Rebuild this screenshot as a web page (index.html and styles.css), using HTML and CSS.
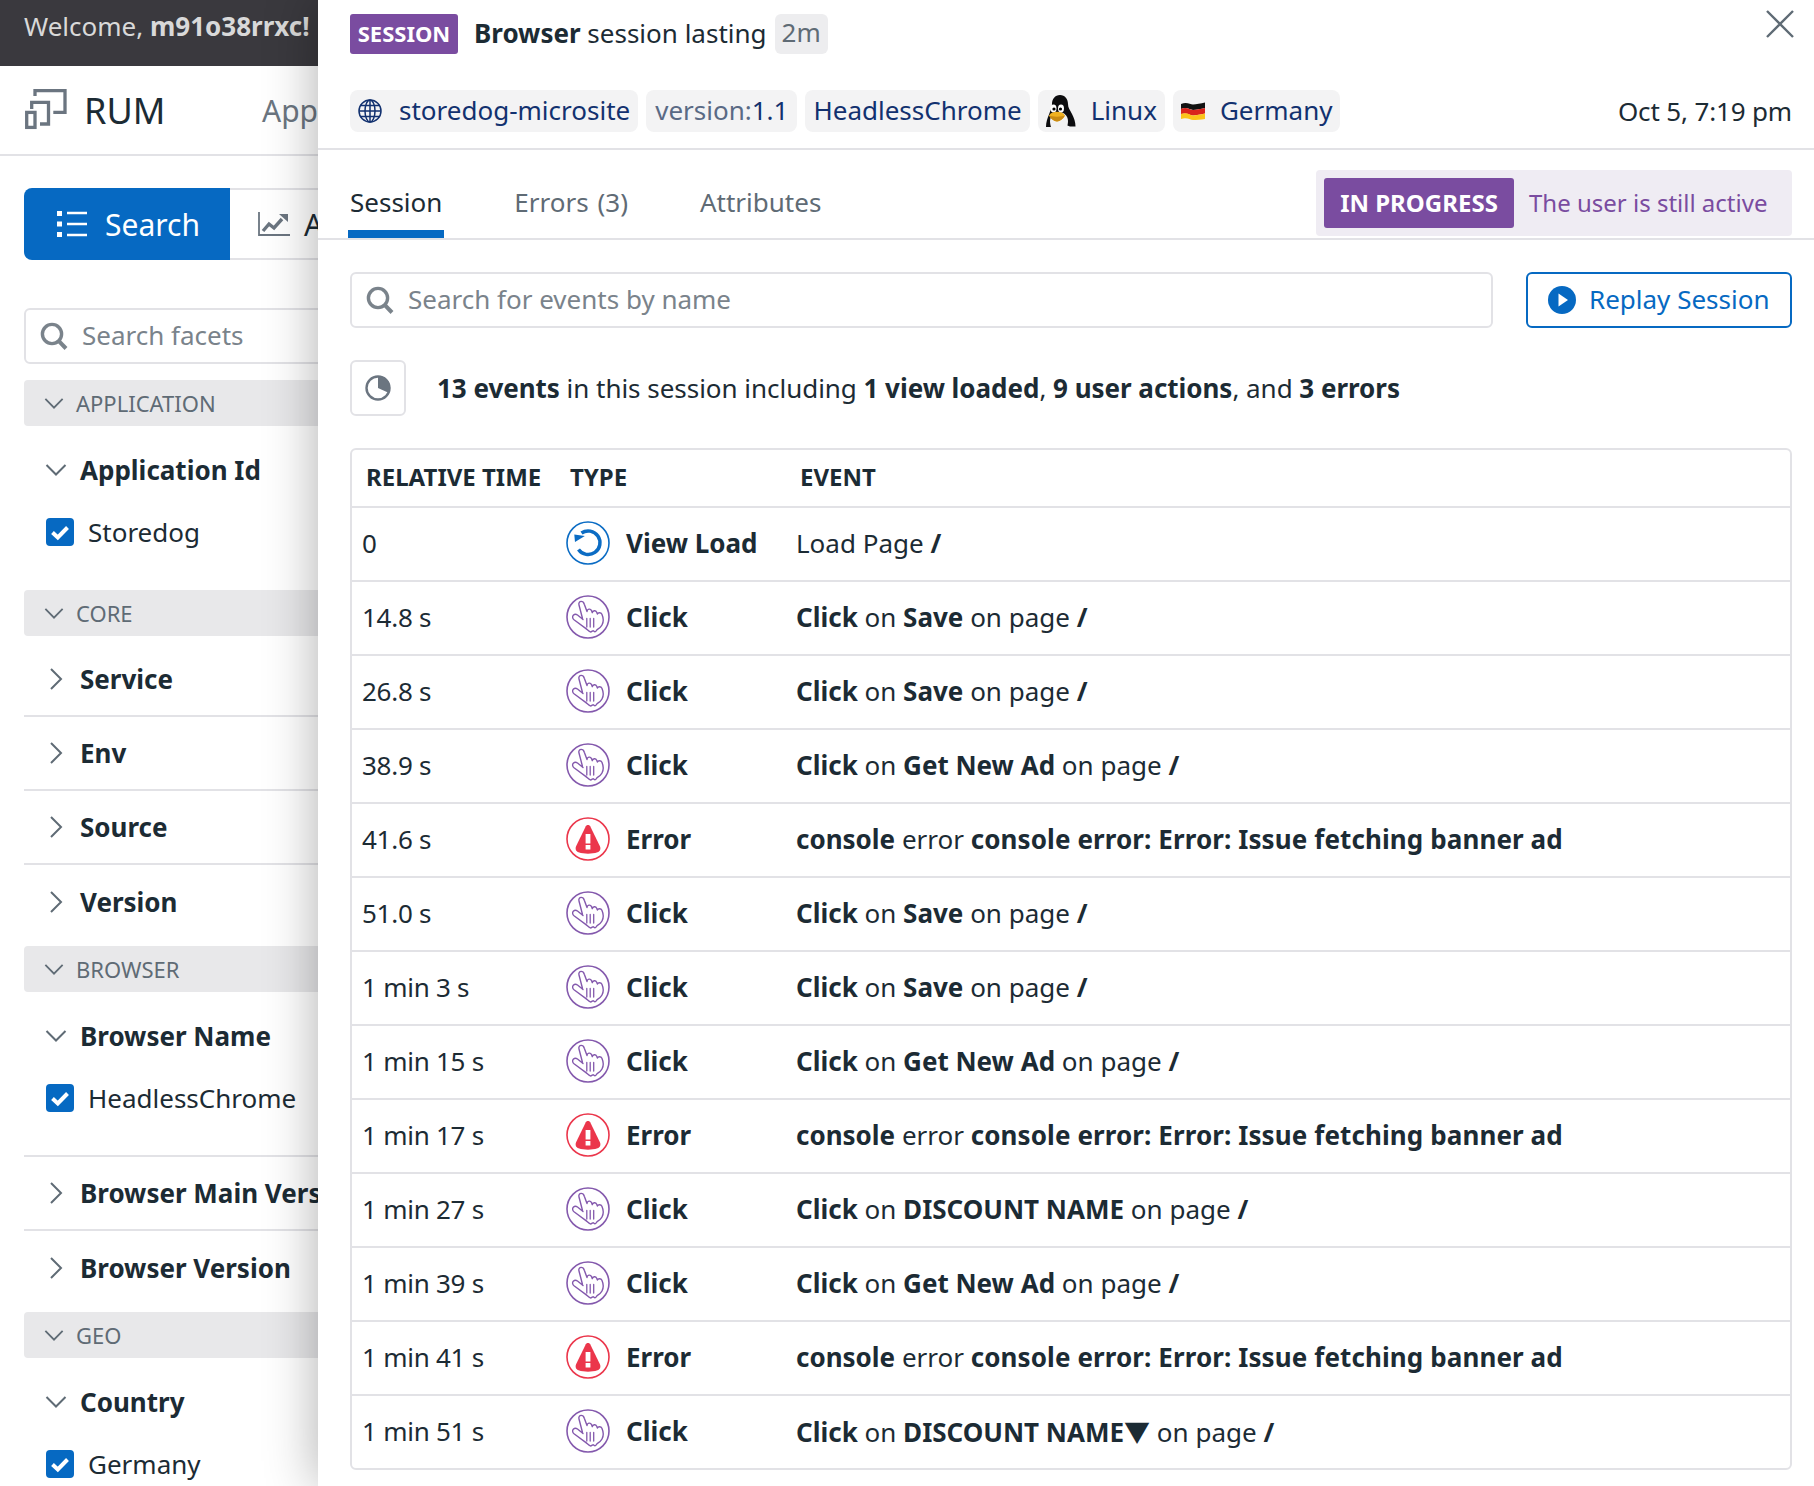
FILE: index.html
```html
<!DOCTYPE html>
<html lang="en">
<head>
<meta charset="utf-8">
<title>RUM Session</title>
<link rel="stylesheet" href="styles.css">
</head>
<body>
<svg class="defs" width="0" height="0" aria-hidden="true">
  <defs>
    <symbol id="hand" viewBox="0 0 44 44">
      <circle cx="22" cy="22" r="21" fill="none" stroke="#8459ad" stroke-width="1.6"/>
      <path d="M16.500 23.500 13 10C12.400 7.600 13.600 6.400 15.200 6.400 16.800 6.400 17.800 7.500 18.300 9.200L21 16.500C21.200 13.800 24.400 13.200 25.500 15.600L26.300 17.700C26.700 15.400 29.700 15.100 30.700 17.200L31.400 19C32 17.200 35 17.200 35.900 19.300 37.500 22.900 37.700 26.800 36 30 34.800 32.300 33 33.500 31.500 34.400 30.500 35 30 36.800 29 36.800 28 36.800 27.800 35.500 26.800 35.800 25.800 36.100 25.400 37.200 24.300 36.900 22.800 36.400 21.500 34.800 20 33.600L8 24.800C6.400 23.500 6.200 21.500 7.300 20.300 8.400 19.100 10.100 19.100 11.500 20L17 24.500" fill="none" stroke="#8459ad" stroke-width="1.4" stroke-linejoin="round" stroke-linecap="round"/>
      <path d="M20.800 23.500v8.500M24.200 23.500v8.500M27.700 23.500v8.500" fill="none" stroke="#8459ad" stroke-width="1.3" stroke-linecap="round"/>
    </symbol>
    <symbol id="warn" viewBox="0 0 44 44">
      <circle cx="22" cy="22" r="21" fill="none" stroke="#eb364b" stroke-width="1.6"/>
      <path d="M19.800 9.200c1-1.700 3.400-1.700 4.400 0L33.800 29c1.300 2.900.3 5.400-2.300 6.300-3 1-6.100 1.400-9.500 1.400s-6.500-.4-9.500-1.400c-2.600-.9-3.600-3.400-2.300-6.300z" fill="#eb364b"/>
      <rect x="19.600" y="17" width="4.800" height="9.500" fill="#fff"/>
      <rect x="19.600" y="28" width="4.800" height="4.500" fill="#fff"/>
    </symbol>
    <symbol id="reload" viewBox="0 0 44 44">
      <circle cx="22" cy="22" r="21" fill="none" stroke="#0b6cc4" stroke-width="1.6"/>
      <path d="M15.500 12A11.800 11.800 0 1 1 12.500 28.500" fill="none" stroke="#0b6cc4" stroke-width="3.500"/>
      <path d="M8.300 13.500 18.800 15 9 21z" fill="#0b6cc4"/>
    </symbol>
    <symbol id="chev-d" viewBox="0 0 22 14">
      <path d="M1.500 2 11 11.500 20.500 2" fill="none" stroke="#5f6b75" stroke-width="2"/>
    </symbol>
    <symbol id="chev-r" viewBox="0 0 14 22">
      <path d="M2 1 12 11 2 21" fill="none" stroke="#5f6b75" stroke-width="2"/>
    </symbol>
    <symbol id="check" viewBox="0 0 28 28">
      <rect width="28" height="28" rx="4" fill="#0669c2"/>
      <path d="M6.500 14.500 11.800 19.500 21.500 9.500" fill="none" stroke="#fff" stroke-width="4"/>
    </symbol>
    <symbol id="mag" viewBox="0 0 28 28">
      <circle cx="12" cy="12" r="9.600" fill="none" stroke="#7a838b" stroke-width="3.400"/>
      <path d="M18.400 18.600 26 26.500" fill="none" stroke="#7a838b" stroke-width="4"/>
    </symbol>
  </defs>
</svg>

<div class="app">
  <aside class="side">
    <div class="welcome">Welcome, <b>m91o38rrxc!</b></div>
    <div class="product">
      <svg class="rum-logo" width="44" height="42" viewBox="0 0 44 42"><g fill="none" stroke="#6b7580" stroke-width="3.300"><path d="M11 7V1.700H41V23.300H29.300"/><path d="M7.700 20V13.400H24.500V35H16"/><rect x="2.700" y="23.400" width="8.300" height="15"/></g></svg>
      <span class="rum-name">RUM</span>
      <span class="rum-app">Applications</span>
    </div>
    <div class="mode">
      <div class="mode-on">
        <svg width="30" height="26" viewBox="0 0 30 26"><path d="M0 2.500h5M0 13h5M0 23.500h5" stroke="#fff" stroke-width="5"/><path d="M10 2h20M10 13h20M10 24h20" stroke="#fff" stroke-width="2.400"/></svg>
        <span>Search</span>
      </div>
      <div class="mode-off">
        <svg width="32" height="24" viewBox="0 0 32 24"><path d="M1 0v23h31" fill="none" stroke="#6b7580" stroke-width="1.800"/><path d="M5 19l6-7 5 4 8-9" fill="none" stroke="#6b7580" stroke-width="3.400"/><path d="M21 2h9v8z" fill="#6b7580"/></svg>
        <span>Analytics</span>
      </div>
    </div>
    <div class="facet-search">
      <svg width="28" height="28"><use href="#mag"/></svg>
      <span>Search facets</span>
    </div>

    <div class="bar"><svg width="20" height="13"><use href="#chev-d"/></svg><span>APPLICATION</span></div>
    <div class="facet open"><span class="chev"><svg width="22" height="14"><use href="#chev-d"/></svg></span><b>Application Id</b></div>
    <div class="value pad"><svg width="28" height="28"><use href="#check"/></svg><span>Storedog</span></div>

    <div class="bar"><svg width="20" height="13"><use href="#chev-d"/></svg><span>CORE</span></div>
    <div class="facet line"><span class="chev"><svg width="14" height="22"><use href="#chev-r"/></svg></span><b>Service</b></div>
    <div class="facet line"><span class="chev"><svg width="14" height="22"><use href="#chev-r"/></svg></span><b>Env</b></div>
    <div class="facet line"><span class="chev"><svg width="14" height="22"><use href="#chev-r"/></svg></span><b>Source</b></div>
    <div class="facet last"><span class="chev"><svg width="14" height="22"><use href="#chev-r"/></svg></span><b>Version</b></div>

    <div class="bar"><svg width="20" height="13"><use href="#chev-d"/></svg><span>BROWSER</span></div>
    <div class="facet open"><span class="chev"><svg width="22" height="14"><use href="#chev-d"/></svg></span><b>Browser Name</b></div>
    <div class="value pad line"><svg width="28" height="28"><use href="#check"/></svg><span>HeadlessChrome</span></div>
    <div class="facet line"><span class="chev"><svg width="14" height="22"><use href="#chev-r"/></svg></span><b>Browser Main Version</b></div>
    <div class="facet last"><span class="chev"><svg width="14" height="22"><use href="#chev-r"/></svg></span><b>Browser Version</b></div>

    <div class="bar"><svg width="20" height="13"><use href="#chev-d"/></svg><span>GEO</span></div>
    <div class="facet open"><span class="chev"><svg width="22" height="14"><use href="#chev-d"/></svg></span><b>Country</b></div>
    <div class="value"><svg width="28" height="28"><use href="#check"/></svg><span>Germany</span></div>
  </aside>

  <main class="panel">
    <svg class="close" width="28" height="28" viewBox="0 0 28 28"><path d="M1 1l26 26M27 1 1 27" fill="none" stroke="#5f6b75" stroke-width="2.400"/></svg>
    <header class="head">
      <div class="title-row">
        <span class="badge">SESSION</span>
        <span class="title"><b>Browser</b> session lasting</span>
        <span class="dur">2m</span>
      </div>
      <div class="chip-row">
        <span class="chip globe">
          <svg width="24" height="24" viewBox="0 0 24 24"><g fill="none" stroke="#12316f" stroke-width="1.500"><circle cx="12" cy="12" r="11"/><ellipse cx="12" cy="12" rx="5" ry="11"/><path d="M12 1v22M1 12h22M2.600 6.500h18.800M2.600 17.500h18.800"/></g></svg>
          <span>storedog-microsite</span>
        </span>
        <span class="chip version"><span><span class="chip-key">version:</span>1.1</span></span>
        <span class="chip"><span>HeadlessChrome</span></span>
        <span class="chip">
          <svg width="30" height="32" viewBox="0 0 30 32"><path d="M14 0c5 0 8 4 8 9 0 4 2 6 4 10 2 4 3.500 8 3.500 12.500H24l-4-1.500H9l-4 2H0c0-5 1.500-9 3-12.500C4.500 15 6 13 6 9c0-5 3-9 8-9z" fill="#0c0c0e"/><path d="M13 17c5 0 9 4 9 9 0 3-1 6-1 6H5s-1-3-1-6c0-5 4-9 9-9z" fill="#f2f2f2"/><ellipse cx="7.500" cy="13.500" rx="3" ry="4" fill="#fff"/><ellipse cx="15" cy="13.500" rx="3" ry="4" fill="#fff"/><circle cx="8" cy="14" r="1.600" fill="#000"/><circle cx="14.500" cy="14" r="1.600" fill="#000"/><path d="M3 20.500C5 17.500 8 16.800 11 16.800s6 .7 8 3.700c-2 3.500-5 6-8 6s-6-2.500-8-6z" fill="#f0b11f"/><path d="M3 20.500c3 1.500 13 1.500 16 0-2 3.500-5 6-8 6s-6-2.500-8-6z" fill="#c98a12"/></svg>
          <span>Linux</span>
        </span>
        <span class="chip">
          <svg width="24" height="18" viewBox="0 0 24 18"><path d="M0 2c6-2.500 9 .6 12 .6S20 1.500 24 .6v5.400c-4 .9-9 2-12 2S6 4.500 0 7z" fill="#111"/><path d="M0 6.800c6-2.500 9 1.200 12 1.200S20 6.900 24 6v5.500c-4 .9-9 2-12 2S6 10 0 12z" fill="#d9231c"/><path d="M0 12c6-2.500 9 1.400 12 1.400s8-1 12-1.900V17c-4 .9-9 1-12 1s-6-3-12-1z" fill="#fbc31a"/></svg>
          <span>Germany</span>
        </span>
        <span class="date">Oct 5, 7:19 pm</span>
      </div>
    </header>

    <nav class="tabs">
      <span class="tab active">Session</span>
      <span class="tab">Errors (3)</span>
      <span class="tab">Attributes</span>
      <div class="status"><span class="status-badge">IN PROGRESS</span><span class="status-text">The user is still active</span></div>
    </nav>

    <section class="body">
      <div class="search-row">
        <div class="event-search"><svg width="28" height="28"><use href="#mag"/></svg><span>Search for events by name</span></div>
        <div class="replay"><svg width="28" height="28" viewBox="0 0 28 28"><circle cx="14" cy="14" r="14" fill="#0669c2"/><path d="M10.500 7.500 20 14l-9.500 6.500z" fill="#fff"/></svg><span>Replay Session</span></div>
      </div>
      <div class="summary">
        <div class="pie"><svg width="26" height="26" viewBox="0 0 26 26"><circle cx="13" cy="13" r="11.500" fill="none" stroke="#6b7580" stroke-width="2.400"/><path d="M13 1a12 12 0 0 1 11 17L13 13z" fill="#6b7580"/></svg></div>
        <p><b>13 events</b> in this session including <b>1 view loaded</b>, <b>9 user actions</b>, and <b>3 errors</b></p>
      </div>

      <div class="table">
        <div class="row th"><span>RELATIVE TIME</span><span>TYPE</span><span>EVENT</span></div>
        <div class="row"><span class="time">0</span><span class="type"><svg width="44" height="44"><use href="#reload"/></svg><b>View Load</b></span><span>Load Page <b>/</b></span></div>
        <div class="row"><span class="time">14.8 s</span><span class="type"><svg width="44" height="44"><use href="#hand"/></svg><b>Click</b></span><span><b>Click</b> on <b>Save</b> on page <b>/</b></span></div>
        <div class="row"><span class="time">26.8 s</span><span class="type"><svg width="44" height="44"><use href="#hand"/></svg><b>Click</b></span><span><b>Click</b> on <b>Save</b> on page <b>/</b></span></div>
        <div class="row"><span class="time">38.9 s</span><span class="type"><svg width="44" height="44"><use href="#hand"/></svg><b>Click</b></span><span><b>Click</b> on <b>Get New Ad</b> on page <b>/</b></span></div>
        <div class="row"><span class="time">41.6 s</span><span class="type"><svg width="44" height="44"><use href="#warn"/></svg><b>Error</b></span><span><b>console</b> error <b class="long">console error: Error: Issue fetching banner ad</b></span></div>
        <div class="row"><span class="time">51.0 s</span><span class="type"><svg width="44" height="44"><use href="#hand"/></svg><b>Click</b></span><span><b>Click</b> on <b>Save</b> on page <b>/</b></span></div>
        <div class="row"><span class="time">1 min 3 s</span><span class="type"><svg width="44" height="44"><use href="#hand"/></svg><b>Click</b></span><span><b>Click</b> on <b>Save</b> on page <b>/</b></span></div>
        <div class="row"><span class="time">1 min 15 s</span><span class="type"><svg width="44" height="44"><use href="#hand"/></svg><b>Click</b></span><span><b>Click</b> on <b>Get New Ad</b> on page <b>/</b></span></div>
        <div class="row"><span class="time">1 min 17 s</span><span class="type"><svg width="44" height="44"><use href="#warn"/></svg><b>Error</b></span><span><b>console</b> error <b class="long">console error: Error: Issue fetching banner ad</b></span></div>
        <div class="row"><span class="time">1 min 27 s</span><span class="type"><svg width="44" height="44"><use href="#hand"/></svg><b>Click</b></span><span><b>Click</b> on <b>DISCOUNT NAME</b> on page <b>/</b></span></div>
        <div class="row"><span class="time">1 min 39 s</span><span class="type"><svg width="44" height="44"><use href="#hand"/></svg><b>Click</b></span><span><b>Click</b> on <b>Get New Ad</b> on page <b>/</b></span></div>
        <div class="row"><span class="time">1 min 41 s</span><span class="type"><svg width="44" height="44"><use href="#warn"/></svg><b>Error</b></span><span><b>console</b> error <b class="long">console error: Error: Issue fetching banner ad</b></span></div>
        <div class="row"><span class="time">1 min 51 s</span><span class="type"><svg width="44" height="44"><use href="#hand"/></svg><b>Click</b></span><span><b>Click</b> on <b>DISCOUNT NAME<span class="tri">▼</span></b> on page <b>/</b></span></div>
      </div>
    </section>
  </main>
</div>
</body>
</html>
```

FILE: styles.css
```css
* { box-sizing: border-box; }
html, body { margin: 0; height: 100%; }
body {
  font-family: "Noto Sans", sans-serif;
  font-size: 26px;
  color: #1c2b34;
  background: #fff;
  overflow: hidden;
}
.defs { position: absolute; }
svg { display: block; flex: none; }
b { font-weight: 700; }

.app { position: relative; width: 1814px; height: 1486px; overflow: hidden; }

/* left rail */
.side { width: 318px; height: 1486px; overflow: hidden; }
.welcome {
  height: 66px;
  background: #3a393e;
  color: #d9d9d9;
  padding-left: 24px;
  line-height: 52px;
  white-space: nowrap;
}
.product {
  height: 90px;
  padding-left: 24px;
  display: flex;
  align-items: center;
  border-bottom: 2px solid #e2e2e6;
  white-space: nowrap;
}
.rum-logo { margin-right: 16px; }
.rum-name { font-size: 36px; flex: 0 0 178px; }
.rum-app { font-size: 30px; color: #6b7580; flex: none; }
.mode { margin: 32px 0 48px 24px; display: flex; height: 72px; white-space: nowrap; }
.mode-on {
  flex: 0 0 206px;
  background: #0669c2;
  color: #fff;
  border-radius: 8px 0 0 8px;
  display: flex;
  align-items: center;
  gap: 18px;
  padding-left: 33px;
  font-size: 30px;
}
.mode-off {
  flex: none;
  border: 2px solid #e2e2e6;
  border-left: 0;
  display: flex;
  align-items: center;
  gap: 14px;
  padding: 0 20px 0 28px;
  font-size: 30px;
}
.facet-search {
  margin: 0 -20px 16px 24px;
  height: 56px;
  border: 2px solid #e2e2e6;
  border-radius: 6px;
  display: flex;
  align-items: center;
  gap: 14px;
  padding-left: 14px;
  color: #7a838b;
  white-space: nowrap;
}
.facet-search span { padding-bottom: 2px; }
.bar {
  margin: 0 0 7px 24px;
  height: 46px;
  background: #e8e8ea;
  border-radius: 4px 0 0 4px;
  display: flex;
  align-items: center;
  gap: 12px;
  padding-left: 20px;
  font-size: 22px;
  color: #5f6b75;
}
.facet {
  margin-left: 24px;
  height: 74px;
  display: flex;
  align-items: center;
  white-space: nowrap;
}
.facet.line { border-bottom: 2px solid #e2e2e6; }
.facet.last { margin-bottom: 7px; }
.chev { flex: 0 0 56px; padding-left: 8px; display: flex; justify-content: center; }
.value {
  margin-left: 24px;
  height: 50px;
  padding-left: 22px;
  display: flex;
  align-items: center;
  gap: 14px;
  white-space: nowrap;
}
.value.pad { height: 83px; padding-bottom: 33px; }
.value.line { border-bottom: 2px solid #e2e2e6; height: 84px; padding-bottom: 32px; }

/* overlay panel */
.panel {
  position: absolute;
  left: 318px;
  top: 0;
  right: 0;
  bottom: 0;
  background: #fff;
  box-shadow: 0 0 50px rgba(0, 0, 0, .32);
}
.close { position: absolute; top: 10px; right: 20px; }
.head { padding: 14px 22px 16px 32px; border-bottom: 2px solid #e2e2e6; }
.title-row { height: 40px; display: flex; align-items: center; }
.badge {
  height: 40px;
  width: 108px;
  background: #7a4ca0;
  color: #fff;
  font-weight: 700;
  font-size: 22px;
  border-radius: 3px;
  display: flex;
  align-items: center;
  justify-content: center;
  padding-bottom: 2px;
}
.title { margin-left: 16px; padding-bottom: 3px; }
.dur {
  margin-left: 8px;
  background: #ededef;
  color: #5f6b75;
  border-radius: 6px;
  padding: 0 7px;
  height: 40px;
  line-height: 36px;
}
.chip-row { margin-top: 36px; height: 42px; display: flex; align-items: center; gap: 8px; }
.chip {
  height: 42px;
  background: #f3f3f4;
  border-radius: 8px;
  padding: 0 8px;
  display: flex;
  align-items: center;
  gap: 15px;
  color: #12316f;
  white-space: nowrap;
}
.chip.globe { gap: 17px; }
.chip.version { padding: 0 9px; }
.chip > span { padding-bottom: 2px; }
.chip-key { color: #5a6a85; }
.date { margin-left: auto; letter-spacing: -.15px; }
.tabs {
  height: 90px;
  border-bottom: 2px solid #e2e2e6;
  padding: 0 22px 0 30px;
  display: flex;
  gap: 68px;
}
.tab {
  padding: 0 2px;
  height: 88px;
  line-height: 104px;
  color: #5f6b75;
  word-spacing: 2px;
}
.tab.active { color: #1c2b34; border-bottom: 8px solid #0669c2; }
.status {
  margin: 20px 0 0 auto;
  height: 66px;
  width: 476px;
  background: #efecf3;
  border-radius: 4px;
  display: flex;
  align-items: center;
  padding-left: 8px;
  gap: 15px;
}
.status-badge {
  width: 190px;
  height: 50px;
  background: #7a4ca0;
  color: #fff;
  font-weight: 700;
  font-size: 24px;
  border-radius: 3px;
  display: flex;
  align-items: center;
  justify-content: center;
  padding-bottom: 2px;
}
.status-text { color: #7a4ca0; font-size: 24px; padding-bottom: 2px; }
.body { padding: 32px 22px 0 32px; }
.search-row { display: flex; gap: 33px; height: 56px; }
.event-search {
  flex: 1;
  border: 2px solid #e2e2e6;
  border-radius: 6px;
  display: flex;
  align-items: center;
  gap: 14px;
  padding-left: 14px;
  color: #7a838b;
}
.event-search span, .replay span { padding-bottom: 2px; }
.replay {
  width: 266px;
  border: 2px solid #0669c2;
  border-radius: 6px;
  color: #0669c2;
  display: flex;
  align-items: center;
  gap: 13px;
  padding-left: 20px;
}
.summary { margin-top: 32px; height: 56px; display: flex; align-items: center; gap: 31px; }
.summary p { margin: 0; letter-spacing: -.03px; }
.pie {
  width: 56px;
  height: 56px;
  border: 2px solid #e2e2e6;
  border-radius: 6px;
  display: flex;
  align-items: center;
  justify-content: center;
}
.table { margin-top: 32px; border: 2px solid #e2e2e6; border-radius: 6px; }
.row {
  height: 74px;
  display: grid;
  grid-template-columns: 204px 230px 1fr;
  align-items: center;
  padding: 0 0 2px 10px;
  border-bottom: 2px solid #e2e2e6;
}
.row:last-child { border-bottom: 0; height: 72px; }
.row.th { height: 58px; padding: 0 0 4px 14px; font-weight: 700; font-size: 24px; }
.time { letter-spacing: -.25px; }
.type { display: flex; align-items: center; gap: 16px; }
.long { letter-spacing: .1px; }
.tri { font-family: "Noto Sans CJK JP", "DejaVu Sans", sans-serif; }
```
